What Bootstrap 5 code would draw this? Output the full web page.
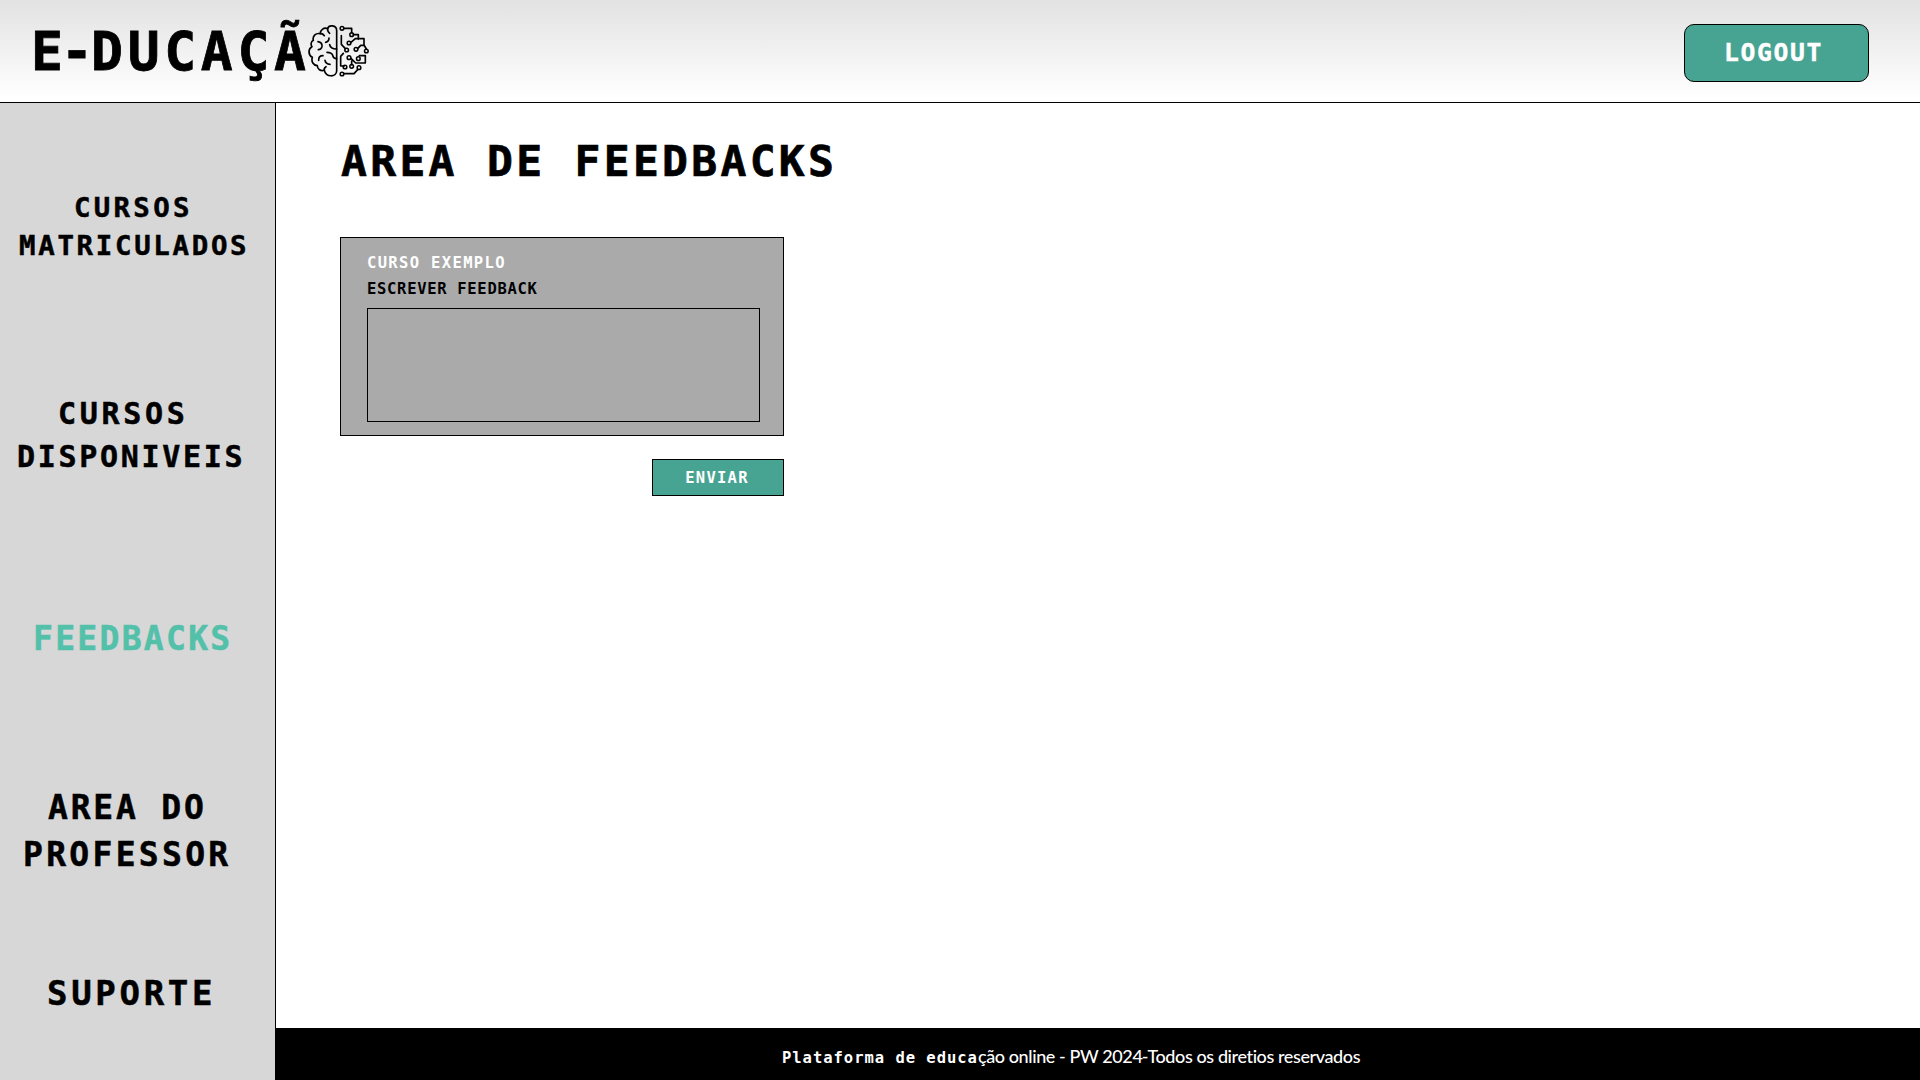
<!DOCTYPE html>
<html lang="pt-BR">
<head>
<meta charset="utf-8">
<meta name="viewport" content="width=device-width, initial-scale=1">
<title>E-ducação</title>
<link href="https://cdn.jsdelivr.net/npm/bootstrap@5.3.0/dist/css/bootstrap.min.css" rel="stylesheet">
<style>
body{font-family:"DejaVu Sans Mono","Liberation Mono",monospace;font-weight:700;color:#000;background:#fff}
.topbar{height:103px;background:linear-gradient(#e2e2e2,#fff 96%);border-bottom:1px solid #000;padding:0 51px 0 31px}
.brand-text{font-size:53px;line-height:60px;letter-spacing:4.7px;margin-top:1px;-webkit-text-stroke:.8px currentColor}
.brand-pre{letter-spacing:-1.9px}
.brain{width:62px;height:54px;margin-left:-3px;margin-top:-1px}
.btn-logout{width:185px;height:58px;margin-top:3px;background:#48a492;border:1px solid #000;border-radius:10px;color:#fff;font-size:24.7px;font-weight:700;letter-spacing:1.6px;padding:1px 6px 0 0;-webkit-text-stroke:.4px currentColor}
.btn-logout:hover,.btn-send:hover{background:#3d8f7f;color:#fff;border-color:#000}
.sidebar{width:276px;background:#d7d7d7;border-right:1px solid #000;padding-top:86px}
.side-link{color:#000;text-decoration:none;white-space:nowrap;-webkit-text-stroke:.5px currentColor}
.side-link span{display:block}
.lk-mine{font-size:27.4px;line-height:38px;letter-spacing:2.7px;margin-bottom:126.5px}
.lk-mine .l1{padding-left:74px;letter-spacing:3.3px}.lk-mine .l2{padding-left:19px}
.lk-open{font-size:30px;line-height:43px;letter-spacing:2.7px;margin-bottom:141.5px}
.lk-open .l1{padding-left:58px;letter-spacing:3.7px}.lk-open .l2{padding-left:17px}
.lk-feed{font-size:33px;line-height:40px;letter-spacing:2.3px;margin-bottom:124.5px;color:#53c0aa}
.lk-feed .l1{padding-left:33px}
.lk-prof{font-size:33px;line-height:47px;letter-spacing:3.3px;margin-bottom:95px}
.lk-prof .l1{padding-left:48px;letter-spacing:2.8px}.lk-prof .l2{padding-left:23px}
.lk-help{font-size:34px;line-height:40px;letter-spacing:3.7px}
.lk-help .l1{padding-left:47px}
.content{padding:36px 64px 0}
.page-title{font-size:43px;line-height:44px;letter-spacing:3.3px;font-weight:700;margin:0 0 54px;padding-left:1px;-webkit-text-stroke:.7px currentColor}
.course-box{width:444px;height:199px;background:#aaa;border:1px solid #000;padding:16px 23px 0 26px}
.course-name{color:#fff;font-size:15.5px;line-height:18px;letter-spacing:1.35px}
.course-label{font-size:15.5px;line-height:18px;letter-spacing:.7px;margin:8px 0 10px}
.course-text{height:114px;min-height:0;width:393px;background:transparent;border:1px solid #000;border-radius:0;resize:none}
.course-text:focus{background:transparent;border-color:#000;box-shadow:none}
.send-row{width:444px;margin-top:23px}
.btn-send{width:132px;height:37px;background:#48a492;border:1px solid #000;border-radius:0;color:#fff;font-size:15.5px;font-weight:700;letter-spacing:1.25px;padding:2px 2px 0 0}
.foot{height:52px;background:#000;color:#fff;padding-left:506px;padding-top:5px;white-space:nowrap}
.foot-a{font-size:15.5px;letter-spacing:.98px}
.foot-b{font-family:Lato,"Open Sans",sans-serif;font-weight:500;font-size:18px;letter-spacing:-.4px}
.foot-dash{word-spacing:-4.8px}
</style>
</head>
<body class="vh-100 d-flex flex-column overflow-hidden">
<header class="topbar d-flex align-items-center justify-content-between flex-shrink-0">
  <a class="d-flex align-items-center text-black text-decoration-none" href="#">
    <span class="brand-text"><span class="brand-pre">E-</span>DUCAÇÃ</span>
    <svg class="brain" viewBox="54 42 186 162" fill="none" stroke="#000" stroke-width="5" stroke-linecap="round" stroke-linejoin="round" aria-hidden="true">
      <path d="M140 62C140 44 116 44 113 56C101 51 90 61 91 71C76 68 67 79 70 91C62 95 62 104 66 110C53 117 55 136 67 142C63 155 70 166 82 167C82 177 92 185 103 181C108 203 139 202 140 183Z"/>
      <path d="M113 56Q112 65 119 70M107 97Q117 95 117 84M84 95Q97 97 96 110Q94 119 85 119M140 117Q121 117 119 104M140 146Q130 146 128 136Q125 127 111 127M86 151Q85 137 99 137M105 151Q107 162 120 163M91 71Q98 70 103 77M103 181Q101 174 108 170"/>
      <path d="M162 55H185V68M190 74H205V88M154 77V103L166 116M182 98L196 86H222V105L229 117M203 116L212 106H222M183 145L197 159H226V137H208M163 168H152V139L160 130M185 164V153M161 191H192L203 179"/>
      <g stroke-width="4.5"><circle cx="156" cy="55" r="5.5"/><circle cx="185" cy="74" r="5.5"/><circle cx="177" cy="99" r="5.5"/><circle cx="170" cy="120" r="5.5"/><circle cx="198" cy="118" r="5.5"/><circle cx="229" cy="123" r="5.5"/><circle cx="177" cy="143" r="5.5"/><circle cx="205" cy="146" r="5.5"/><circle cx="165" cy="171" r="5.5"/><circle cx="185" cy="169" r="5.5"/><circle cx="207" cy="173" r="5.5"/><circle cx="156" cy="192" r="5.5"/></g>
    </svg>
  </a>
  <button class="btn btn-logout" type="button">LOGOUT</button>
</header>
<div class="d-flex flex-grow-1">
  <nav class="sidebar d-flex flex-column flex-shrink-0">
    <a class="side-link lk-mine" href="#"><span class="l1">CURSOS</span><span class="l2">MATRICULADOS</span></a>
    <a class="side-link lk-open" href="#"><span class="l1">CURSOS</span><span class="l2">DISPONIVEIS</span></a>
    <a class="side-link lk-feed" href="#" aria-current="page"><span class="l1">FEEDBACKS</span></a>
    <a class="side-link lk-prof" href="#"><span class="l1">AREA DO</span><span class="l2">PROFESSOR</span></a>
    <a class="side-link lk-help" href="#"><span class="l1">SUPORTE</span></a>
  </nav>
  <div class="d-flex flex-column flex-grow-1">
    <main class="content flex-grow-1">
      <h1 class="page-title">AREA DE FEEDBACKS</h1>
      <section class="course-box">
        <div class="course-name">CURSO EXEMPLO</div>
        <label class="course-label d-block" for="feedback">ESCREVER FEEDBACK</label>
        <textarea class="course-text form-control" id="feedback"></textarea>
      </section>
      <div class="send-row d-flex justify-content-end"><button class="btn btn-send" type="button">ENVIAR</button></div>
    </main>
    <footer class="foot d-flex align-items-center"><div><span class="foot-a">Plataforma de educa</span><span class="foot-b">ção online - PW 2024<span class="foot-dash"> - </span>Todos os diretios reservados</span></div></footer>
  </div>
</div>
<script src="https://cdn.jsdelivr.net/npm/bootstrap@5.3.0/dist/js/bootstrap.bundle.min.js"></script>
</body>
</html>
